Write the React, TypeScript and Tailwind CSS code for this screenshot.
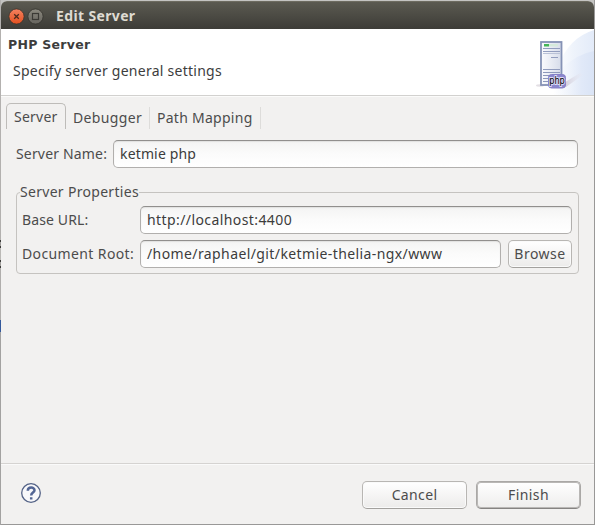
import React from "react";

const fieldClass =
  "flex h-7 items-center rounded-[5px] border border-[#b1afad] border-t-[#918f8d] bg-gradient-to-b from-[#f4f4f3] via-[#fbfbfb] to-white pl-1.5 text-[#3c3c3c] shadow-[inset_0_1px_1px_#e2e1e0]";
const buttonClass =
  "flex h-7 items-center justify-center rounded-[5px] border border-[#b8b6b3] border-b-[#a3a19e] bg-gradient-to-b from-white to-[#ecebea] shadow-[inset_0_0_0_1px_#fafafa]";

function Field({ className, children }: { className: string; children: React.ReactNode }) {
  return <div className={`${fieldClass} ${className}`}>{children}</div>;
}

function TitleButtons() {
  return (
    <svg width="44" height="20" viewBox="0 0 44 20" className="shrink-0">
      <defs>
        <linearGradient id="close" x2="0" y2="1">
          <stop stopColor="#f58260" />
          <stop offset="1" stopColor="#e4501f" />
        </linearGradient>
        <linearGradient id="max" x2="0" y2="1">
          <stop stopColor="#8b897f" />
          <stop offset="1" stopColor="#66645d" />
        </linearGradient>
      </defs>
      <circle cx="8.5" cy="10.5" r="7.6" fill="url(#close)" stroke="#3d342c" strokeWidth="0.8" />
      <path d="M6.2 8.2l4.6 4.6M10.8 8.2l-4.6 4.6" stroke="#4c2a1c" strokeWidth="1.3" />
      <circle cx="27.5" cy="10.5" r="7.6" fill="url(#max)" stroke="#35342f" strokeWidth="0.8" />
      <rect x="24.5" y="7.5" width="6" height="6" fill="none" stroke="#3b3a35" strokeWidth="1.2" />
    </svg>
  );
}

function ServerBanner() {
  return (
    <svg width="75" height="66" viewBox="519 29 75 66" className="ml-auto shrink-0">
      <defs>
        <linearGradient id="sky" x1="0" x2="1">
          <stop stopColor="#fff" />
          <stop offset="0.5" stopColor="#eef3fb" />
          <stop offset="1" stopColor="#e3ebf9" />
        </linearGradient>
        <linearGradient id="sky2" x1="0" x2="1">
          <stop stopColor="#fff" stopOpacity="0.3" />
          <stop offset="0.7" stopColor="#e1e9f8" />
          <stop offset="1" stopColor="#dae4f6" />
        </linearGradient>
        <linearGradient id="tower" x1="0" x2="1">
          <stop stopColor="#fbfbfd" />
          <stop offset="1" stopColor="#d6dcea" />
        </linearGradient>
        <linearGradient id="shadow" x1="0" x2="1">
          <stop stopColor="#c9c2cf" />
          <stop offset="1" stopColor="#e9eaf4" stopOpacity="0.2" />
        </linearGradient>
      </defs>
      <path d="M558 67Q568 38 594 30V95H554Z" fill="url(#sky)" />
      <path d="M560 70Q576 54 594 51V95H552Z" fill="url(#sky2)" />
      <path d="M562 84L580 73L583 75L566 87Z" fill="url(#shadow)" />
      <ellipse cx="540" cy="85.5" rx="4" ry="1.2" fill="#e3dfe4" />
      <rect x="541" y="42" width="20.5" height="43" fill="url(#tower)" stroke="#8592b5" strokeWidth="1.8" />
      <rect x="544" y="44" width="5" height="2.5" fill="#46b659" />
      <rect x="549" y="44" width="9" height="2.5" fill="#d5eadb" />
      <path d="M543 48.5H560M543 51.5H560M551 57.5H558M543 69.5H560" stroke="#929dbe" />
      <path d="M543 53.5H560" stroke="#bac2d7" />
      <path d="M543 72.5H560M543 75.5H560M543 78.5H560M543 81.5H560" stroke="#8c98bb" />
      <rect x="548.5" y="74.5" width="17" height="13.5" rx="3" fill="#8b87ce" stroke="#8580c6" />
      <text x="549.2" y="84" textLength="15.6" lengthAdjust="spacingAndGlyphs" fontFamily="DejaVu Sans, sans-serif" fontSize="10" fill="#000" stroke="#dddcf6" strokeWidth="2" paintOrder="stroke">
        php
      </text>
    </svg>
  );
}

function DesktopEdge() {
  return (
    <div className="flex w-px shrink-0 flex-col">
      <div className="h-[240px] bg-[#b3b1af]" />
      <div className="h-2 border-y-2 border-[#3b3b39] bg-[#a09e9b]" />
      <div className="h-3 bg-[#bbb9b6]" />
      <div className="h-2 border-y-2 border-[#3b3b39] bg-[#a09e9b]" />
      <div className="h-[52px] bg-[#b0aeac]" />
      <div className="h-3 bg-[#34599c]" />
      <div className="flex-1 bg-[#a3a2a1]" />
    </div>
  );
}

export default function App() {
  return (
    <div className="flex h-[525px] w-[595px] overflow-hidden bg-[#999897] font-['Noto_Sans','Open_Sans',sans-serif] text-[14px] leading-5 text-[#4c4c4c] whitespace-nowrap">
      <DesktopEdge />
      <div className="h-[524px] w-[593px] bg-[#c4c4c2] pt-px">
      <main className="flex h-[523px] flex-col overflow-hidden rounded-t-[6px] bg-[#f2f1f0]">
        <header className="flex h-7 shrink-0 items-center border-t border-[#6d6b60] bg-gradient-to-b from-[#5b5a51] to-[#3d3c37] pl-[7px] text-[#dfdbd2]">
          <TitleButtons />
          <h1 className="ml-1 text-[14px] font-bold"><span className="tracking-[0.36px]">Edit Server</span></h1>
        </header>
        <section className="flex h-[67px] shrink-0 border-b border-[#d2d1cf] bg-white">
          <div className="pl-[7px] pt-1.5 text-[#3d3d3d]">
            <h2 className="font-['DejaVu_Sans',sans-serif] text-[12.5px] font-bold"><span className="tracking-[0.28px]">PHP Server</span></h2>
            <p className="mt-1.5 pl-[5px]"><span className="tracking-[0.26px]">Specify server general settings</span></p>
          </div>
          <ServerBanner />
        </section>
        <nav className="flex h-[33px] shrink-0 border-t border-[#fbfbfa] pl-[5px] pt-1.5">
          <div className="w-[60px] rounded-t-[5px] border border-b-0 border-[#bebcb9] pl-[7px] pt-[3px]"><span className="tracking-[0.25px]">Server</span></div>
          <div className="mt-1 w-[84px] border-r border-[#dddcda] pl-[7px] pt-px"><span className="tracking-[0.37px]">Debugger</span></div>
          <div className="mt-1 w-[111px] border-r border-[#dddcda] pl-[7px] pt-px"><span className="tracking-[0.27px]">Path Mapping</span></div>
        </nav>
        <div className="mt-[11px] flex h-7 shrink-0 items-center pl-[15px]">
          <label className="w-[97px]"><span className="tracking-[0.17px]">Server Name:</span></label>
          <Field className="w-[465px]"><span className="tracking-[0.15px]">ketmie php</span></Field>
        </div>
        <fieldset className="ml-[15px] mt-[14px] h-[92px] w-[563px] shrink-0 rounded border border-[#c5c3c0] px-[5px] pb-1.5">
          <legend className="-ml-[2px] h-5"><span className="tracking-[0.3px]">Server Properties</span></legend>
          <div className="mt-1 flex h-7 items-center">
            <label className="w-[118px]"><span className="tracking-[0.12px]">Base URL:</span></label>
            <Field className="w-[432px]"><span className="tracking-[0.41px]">http://localhost:4400</span></Field>
          </div>
          <div className="mt-1.5 flex h-7 items-center">
            <label className="w-[118px]"><span className="tracking-[0.38px]">Document Root:</span></label>
            <Field className="w-[361px]"><span className="tracking-[0.4px]">/home/raphael/git/ketmie-thelia-ngx/www</span></Field>
            <button className={`${buttonClass} ml-[7px] w-[64px]`}><span className="tracking-[0.5px]">Browse</span></button>
          </div>
        </fieldset>
        <footer className="mt-auto flex h-[61px] shrink-0 items-start border-t border-[#d5d3d1] pl-5 pr-[13px] pt-[17px] shadow-[inset_0_1px_0_#fafafa]">
          <svg width="22" height="22" viewBox="0 0 22 22" className="mt-px">
            <circle cx="10" cy="11" r="9.3" fill="#f8f8fa" stroke="#536286" strokeWidth="1.3" />
            <path d="M6.8 8.7C6.8 4.6 13.5 4.6 13.5 8.2C13.5 10.6 10.2 10.6 10.2 13.4M10.2 15.2V17.4" fill="none" stroke="#526594" strokeWidth="2.5" />
          </svg>
          <button className={`${buttonClass} ml-auto w-[105px]`}><span className="tracking-[0.35px]">Cancel</span></button>
          <button className="ml-[9px] flex h-7 w-[105px] items-center justify-center rounded-[5px] border border-[#aaa8a6] border-b-[#858381] bg-gradient-to-b from-white to-[#eeedec] shadow-[inset_0_0_0_1px_#b9b7b5]"><span className="tracking-[0.4px]">Finish</span></button>
        </footer>
      </main>
      </div>
    </div>
  );
}
